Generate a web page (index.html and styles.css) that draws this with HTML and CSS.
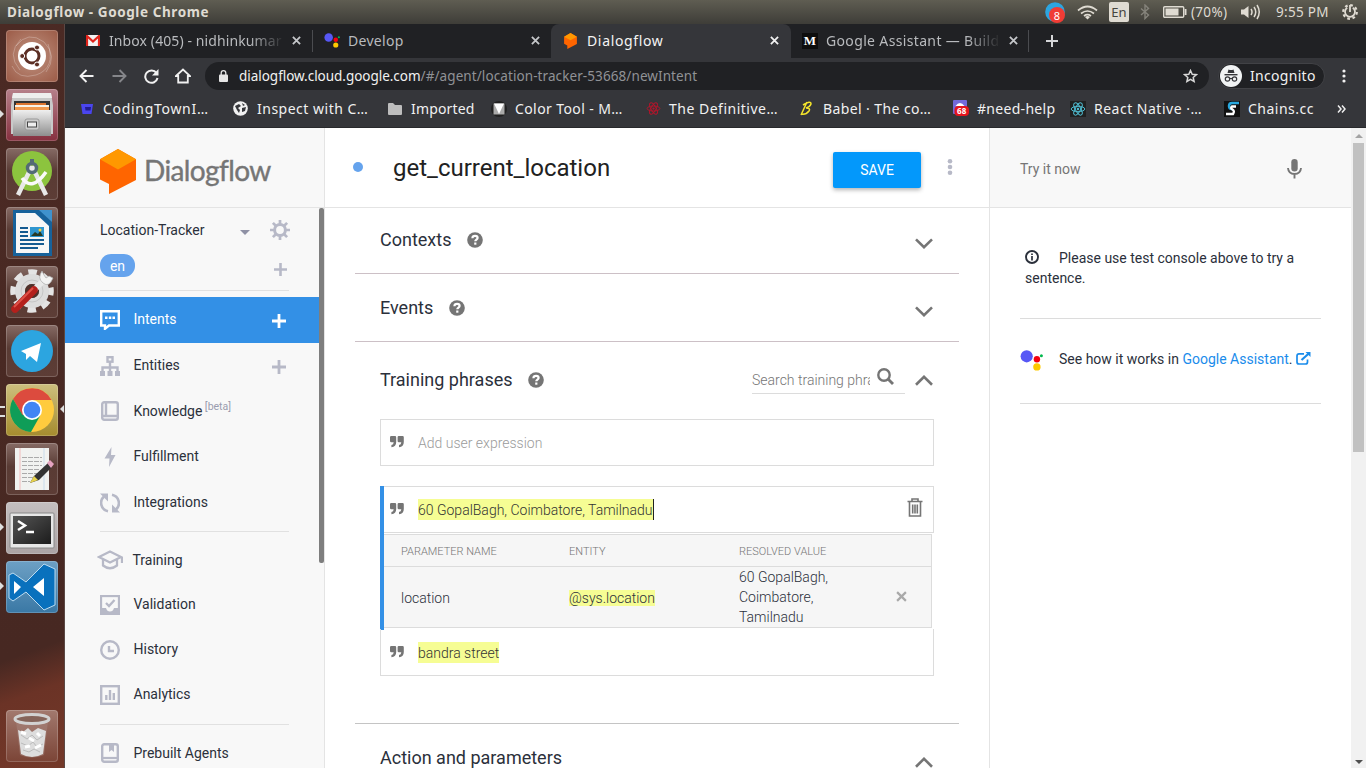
FILE: index.html
```html
<!DOCTYPE html>
<html lang="en">
<head>
<meta charset="utf-8">
<title>Dialogflow</title>
<link rel="stylesheet" href="styles.css">
</head>
<body>
<svg class="defs" width="0" height="0">
  <defs>
    <linearGradient id="gMetal" x1="0" y1="0" x2="0" y2="1"><stop offset="0" stop-color="#efefef"/><stop offset="1" stop-color="#8e8e8e"/></linearGradient>
    <linearGradient id="gDark" x1="0" y1="0" x2="1" y2="1"><stop offset="0" stop-color="#555"/><stop offset="1" stop-color="#1c1c1c"/></linearGradient>
    <symbol id="help" viewBox="0 0 16 16"><circle cx="8" cy="8" r="7.800" fill="#757575"/><path d="M5.400 6.200C5.500 4.600 6.700 3.900 8.100 3.900c1.400 0 2.500.8 2.500 2.100 0 1.700-2.300 1.700-2.300 3.300" fill="none" stroke="#fff" stroke-width="2.200"/><rect x="7.200" y="10.500" width="2.200" height="2.200" fill="#fff"/></symbol>
    <symbol id="down" viewBox="0 0 18 11"><path d="M1 1.300 9 9.200 17 1.300" fill="none" stroke="#757575" stroke-width="2.600"/></symbol>
    <symbol id="quote" viewBox="0 0 14 12"><path d="M0 1.200Q0 0 1.200 0H5Q6.200 0 6.200 1.200V6Q6.200 11 1.400 11.200V9Q3.600 8.700 3.700 6.200H1.200Q0 6.200 0 5ZM7.600 1.200Q7.600 0 8.800 0h3.800Q13.800 0 13.800 1.200V6Q13.800 11 9 11.200V9q2.200-.3 2.300-2.800H8.800Q7.600 6.200 7.600 5Z" fill="#757575"/></symbol>
    <symbol id="close" viewBox="0 0 10 10"><path d="M1 1 9 9M9 1 1 9" stroke="currentColor" stroke-width="2"/></symbol>
    <symbol id="plus" viewBox="0 0 14 14"><path d="M7 0V14M0 7H14" stroke="currentColor" stroke-width="2.800"/></symbol>
    <symbol id="assistant" viewBox="0 0 23 21"><circle cx="6.700" cy="6.300" r="6.100" fill="#5757f5"/><circle cx="16.900" cy="9.300" r="3.200" fill="#f5000f"/><circle cx="16.900" cy="16.900" r="3.700" fill="#fdc900"/><circle cx="21.400" cy="5.800" r="1.500" fill="#00b84c"/></symbol>
    <symbol id="flow" viewBox="0 0 36 45"><path d="M18 0 36 10.300V31L9 45V35L0 30.500V10.300Z" fill="#ff6500"/><path d="M18 0 36 10.300 18 20.500 0 10.300Z" fill="#ff9800"/></symbol>
    <symbol id="atom" viewBox="0 0 16 16"><g fill="none" stroke="currentColor" stroke-width="1"><ellipse cx="8" cy="8" rx="6.800" ry="2.700"/><ellipse cx="8" cy="8" rx="6.800" ry="2.700" transform="rotate(60 8 8)"/><ellipse cx="8" cy="8" rx="6.800" ry="2.700" transform="rotate(120 8 8)"/></g><circle cx="8" cy="8" r="1.200" fill="currentColor"/></symbol>
  </defs>
</svg>

<header class="sysbar">
  <span class="systitle">Dialogflow - Google Chrome</span>
  <div class="tray">
    <svg width="20" height="21" viewBox="0 0 20 21"><circle cx="10" cy="10" r="9.800" fill="#2ca5e0"/><circle cx="12" cy="13" r="8" fill="#f03c35"/><text x="12" y="17.500" text-anchor="middle" class="badge">8</text></svg>
    <svg class="t-wifi" width="21" height="15" viewBox="0 0 21 15"><g fill="none" stroke="#dfdbd2" stroke-width="1.700"><path d="M1 5.500Q10.500-2.500 20 5.500M4 8.500q6.500-5 13 0M7 11q3.500-2.600 7 0"/></g><path d="M10.500 14.500 8 12q2.500-1.800 5 0Z" fill="#dfdbd2"/></svg>
    <span class="lang">En</span>
    <svg class="t-bt" width="10" height="16" viewBox="0 0 10 16"><path d="M1 4.500 8.500 11 5 14.500V1L8.500 4.500 1 11" fill="none" stroke="#85837b" stroke-width="1.400"/></svg>
    <svg class="t-bat" width="24" height="12" viewBox="0 0 24 12"><rect x=".7" y=".7" width="20" height="10.600" rx="1" fill="none" stroke="#dfdbd2" stroke-width="1.400"/><rect x="2.500" y="2.500" width="13" height="7" fill="#dfdbd2"/><path d="M22.600 3v6" stroke="#dfdbd2" stroke-width="1.800"/></svg>
    <span class="pct">(70%)</span>
    <svg class="t-vol" width="20" height="16" viewBox="0 0 20 16"><path d="M0 5.500H3L7.500 2V14L3 10.500H0Z" fill="#dfdbd2"/><path d="M10 5q2 3 0 6M13 3q3.500 5 0 10M16 1q4.500 7 0 14" fill="none" stroke="#dfdbd2" stroke-width="1.500"/></svg>
    <span class="clock">9:55 PM</span>
    <svg class="t-gear" width="16" height="16" viewBox="0 0 16 16"><circle cx="8" cy="8" r="6.800" fill="none" stroke="#dfdbd2" stroke-width="2.200" stroke-dasharray="2.700 2.640"/><path d="M5.200 3.700A5 5 0 1 0 10.800 3.700" fill="none" stroke="#dfdbd2" stroke-width="1.800"/><path d="M8 1v7" stroke="#dfdbd2" stroke-width="1.800"/></svg>
  </div>
</header>

<div class="desktop">
  <nav class="dock">
    <div class="tile t-ubuntu"><svg viewBox="0 0 52 52"><g fill="none" stroke="#fff" stroke-opacity=".25"><path d="M10 16Q22 0 38 12 52 26 40 42M14 40Q0 24 15 9M42 14Q50 38 30 45 12 50 6 36"/></g><circle cx="26" cy="26" r="14" fill="#fff"/><circle cx="26" cy="26" r="7" fill="none" stroke="#5b2e24" stroke-width="3"/><g fill="#5b2e24" stroke="#fff"><circle cx="16.200" cy="26" r="2.500"/><circle cx="31" cy="17.500" r="2.500"/><circle cx="31" cy="34.500" r="2.500"/></g></svg></div>
    <div class="tile t-files run"><svg viewBox="0 0 52 52"><path d="M7 4H45L47 16V45H5V16Z" fill="#c9c9c9"/><path d="M7 4H45L46 9H6Z" fill="#eee"/><rect x="8" y="12" width="36" height="12" fill="#333"/><path d="M10 14h30v7H10Z" fill="#dc752f"/><path d="M9 16H43V18H9Z" fill="#f7f2e8"/><path d="M9 18H43V22H9Z" fill="#f09a50"/><rect x="7" y="21" width="38" height="26" fill="url(#gMetal)"/><rect x="19" y="30" width="14" height="11" rx="2" fill="#ccc" stroke="#999"/><rect x="21.500" y="33" width="9" height="5" fill="#eee" stroke="#444"/></svg></div>
    <div class="tile t-studio"><svg viewBox="0 0 52 52"><circle cx="26" cy="23" r="20" fill="#8cc43e"/><path d="M26 18 12 47M26 18 40 47" stroke="#e8e8e8" stroke-width="4.500"/><path d="M16 30Q26 44 40 24" fill="none" stroke="#fafafa" stroke-width="3.500"/><path d="M24 11h4v4h-4Z" fill="#536b75"/><circle cx="26" cy="20" r="4.500" fill="none" stroke="#536b75" stroke-width="3.500"/></svg></div>
    <div class="tile t-writer"><svg viewBox="0 0 52 52"><path d="M7 3H34L46 15V49H7Z" fill="#17629b"/><path d="M33 3H46V15Z" fill="#3f92cd"/><path d="M10 6H29L43 19V46H10Z" fill="#f7f7f7"/><g stroke="#155b91" stroke-width="2"><path d="M14 21h8M14 25h8M14 29h8M14 33H38M14 37H38M14 41H32"/></g><rect x="24" y="20" width="14" height="10" fill="#2f96cf"/><path d="M25 29l4-4 3 2 2-3 3 5Z" fill="#283a24"/><circle cx="34" cy="23" r="1.500" fill="#fbd13a"/></svg></div>
    <div class="tile t-tools"><svg viewBox="0 0 52 52"><circle cx="26" cy="25" r="18.800" fill="none" stroke="#e4e4e4" stroke-width="6" stroke-dasharray="8.500 6.265" stroke-dashoffset="4.250"/><circle cx="26" cy="25" r="12" fill="none" stroke="#dcdcdc" stroke-width="10"/><circle cx="26" cy="25" r="11" fill="none" stroke="#c6c6c6" stroke-width="1"/><circle cx="26" cy="25" r="7" fill="#50312b"/><path d="M27 25 39 13" stroke="#e9e9e9" stroke-width="6"/><path d="M36 5Q31 12 37 17T47 12L43 10 40 12 38 9Z" fill="#f3f3f3" stroke="#aaa" stroke-width=".7"/><path d="M9 43 28 24" stroke="#b4201c" stroke-width="7.500" stroke-linecap="round"/><path d="M8 41 27 22" stroke="#df5147" stroke-width="2"/></svg></div>
    <div class="tile t-telegram"><svg viewBox="0 0 52 52"><circle cx="26" cy="26" r="21" fill="#2ca5e0"/><path d="M15 26 35 18 31 37 24 31 20 35V29Z" fill="#fff"/></svg></div>
    <div class="tile t-chrome run active"><svg viewBox="0 0 52 52"><circle cx="26" cy="26" r="22" fill="#ffcb3e"/><path d="M26 26 16.500 31.500 7 15A22 22 0 0 1 45.500 16H26Z" fill="#dc4b3e"/><path d="M7 15A22 22 0 0 0 25 48L34 32 26 26 16.500 31Z" fill="#0f9d58"/><circle cx="26" cy="26" r="10" fill="#fff"/><circle cx="26" cy="26" r="8.300" fill="#4285f4"/></svg></div>
    <div class="tile t-edit"><svg viewBox="0 0 52 52"><rect x="9" y="5" width="34" height="42" fill="#f1f2f0"/><path d="M14 5V47" stroke="#f2bcbc"/><path d="M38 5V47" stroke="#c9dcec"/><path d="M16 14.500H36M16 18.500H36M16 22.500H36M16 26.500H34M16 30.500H32M16 34.500H28M16 38.500H24" stroke="#aaa" stroke-dasharray="5 1"/><path d="M24 40 28 33 42 20 46 24 33 37Z" fill="#333"/><path d="M41 20 44 17 48 21 45 25Z" fill="#e5a3c0"/><path d="M24 40 28 33 32 37Z" fill="#e7d24c"/></svg></div>
    <div class="tile t-term run"><svg viewBox="0 0 52 52"><rect x="4" y="11" width="44" height="35" rx="1" fill="#e7e7e7" stroke="#888"/><rect x="7" y="14" width="38" height="28" fill="url(#gDark)"/><path d="M12 19 19 23.500 12 28" fill="none" stroke="#fff" stroke-width="2.500"/><path d="M20 30h8" stroke="#fff" stroke-width="2.500"/></svg></div>
    <div class="tile t-code run"><svg viewBox="0 0 52 52"><path d="M3 14 7 12 20 21 38 3 49 8V44L38 49 20 31 7 40 3 37Z" fill="#0971bd" stroke="#bcdcf1"/><path d="M8 20 15 26 8 33ZM27 26 38 17V35Z" fill="#fff"/></svg></div>
    <div class="tile t-trash"><svg viewBox="0 0 52 52"><path d="M10 11 14 45Q26 50 38 45L42 11Z" fill="#a8867d" fill-opacity=".5"/><path d="M12 20 17 22 22 18 26 22 32 18 40 21 37 44Q26 50 15 44Z" fill="#ddd"/><path d="M15 25l6 4 5-4 5 5 6-4M15 33l7 3 5-4 4 5 6-3M17 40l6 2 5-3 6 3" fill="none" stroke="#bbb"/><path d="M15 22l5 2M23 28l5 3M31 23l3 3M19 37l5-1M29 38l6-3" stroke="#fff" stroke-width="3"/><ellipse cx="26" cy="9" rx="17" ry="4.500" fill="#85645a" stroke="#d2d2d2" stroke-width="3"/></svg></div>
  </nav>

  <div class="browser">
    <div class="tabs">
      <div class="tab tab1"><svg width="14" height="11" viewBox="0 0 14 11"><rect width="14" height="11" fill="#f2f2f2"/><path d="M1 11V1L7 6.500 13 1V11" fill="none" stroke="#e0241b" stroke-width="2.200"/></svg><span class="fade">Inbox (405) - nidhinkumar</span><svg class="x" width="9" height="9"><use href="#close"/></svg></div>
      <div class="tab tab2"><svg width="16" height="15"><use href="#assistant"/></svg><span>Develop</span><svg class="x" width="9" height="9"><use href="#close"/></svg></div>
      <div class="tab tab3"><svg width="13" height="16"><use href="#flow"/></svg><span>Dialogflow</span><svg class="x" width="9" height="9"><use href="#close"/></svg></div>
      <div class="tab tab4"><b class="medium">M</b><span class="fade">Google Assistant — Build</span><svg class="x" width="9" height="9"><use href="#close"/></svg></div>
      <svg class="newtab" width="12" height="12" viewBox="0 0 12 12"><path d="M6 0V12M0 6H12" stroke="#d5d6d8" stroke-width="2"/></svg>
    </div>
    <div class="toolbar">
      <svg class="nav-ic n1" width="15" height="14" viewBox="0 0 15 14"><path d="M14.500 7H1.500M7.500 1 1.500 7 7.500 13" fill="none" stroke="#f1f1f1" stroke-width="1.900"/></svg>
      <svg class="nav-ic n2" width="15" height="14" viewBox="0 0 15 14"><path d="M.5 7H13.500M7.500 1 13.500 7 7.500 13" fill="none" stroke="#85868a" stroke-width="1.900"/></svg>
      <svg class="nav-ic n3" width="15" height="15" viewBox="0 0 15 15"><path d="M12.500 4A6.200 6.200 0 1 0 13.500 9" fill="none" stroke="#f1f1f1" stroke-width="2"/><path d="M14.500 0V6.500H8Z" fill="#f1f1f1"/></svg>
      <svg class="nav-ic n4" width="16" height="16" viewBox="0 0 16 16"><path d="M1 8 8 1.500 15 8H12.800V14.500H3.200V8Z" fill="none" stroke="#f1f1f1" stroke-width="1.800"/></svg>
      <div class="url">
        <svg width="9" height="12" viewBox="0 0 9 12"><rect y="4.500" width="9" height="7.500" rx="1" fill="#e6e6e6"/><path d="M2.200 5V3a2.300 2.300 0 0 1 4.600 0V5" fill="none" stroke="#e6e6e6" stroke-width="1.300"/></svg>
        <span class="addr">dialogflow.cloud.google.com<i>/#/agent/location-tracker-53668/newIntent</i></span>
        <svg class="star" width="15" height="14" viewBox="0 0 15 14"><path d="M7.500 1.500 9.200 5.300 13.300 5.700 10.200 8.500 11.100 12.500 7.500 10.400 3.900 12.500 4.800 8.500 1.700 5.700 5.800 5.300Z" fill="none" stroke="#d8d8d8" stroke-width="1.500"/></svg>
      </div>
      <div class="incog"><svg width="22" height="22" viewBox="0 0 22 22"><circle cx="11" cy="11" r="11" fill="#f1f3f4"/><path d="M7.500 8 8.500 4.500Q11 5.500 13.500 4.500L14.500 8Z" fill="#35363a"/><path d="M4.500 9.700H17.500" stroke="#35363a" stroke-width="1.400"/><g fill="none" stroke="#35363a" stroke-width="1.200"><circle cx="7.500" cy="14" r="2.200"/><circle cx="14.500" cy="14" r="2.200"/><path d="M9.700 13.500h2.600"/></g></svg><span>Incognito</span></div>
      <svg class="menu" width="4" height="14" viewBox="0 0 4 14"><g fill="#f1f1f1"><circle cx="2" cy="2" r="1.600"/><circle cx="2" cy="7" r="1.600"/><circle cx="2" cy="12" r="1.600"/></g></svg>
    </div>
    <div class="marks">
      <div class="mark m1"><svg width="12" height="12" viewBox="0 0 12 12"><path d="M0 1H12L10.500 11H1.500Z" fill="#4a45ee"/><path d="M4 4H10L9.500 7.500H4.500Z" fill="#221c8e"/></svg><span>CodingTownI…</span></div>
      <div class="mark m2"><svg width="15" height="15" viewBox="0 0 15 15"><circle cx="7.500" cy="7.500" r="7.300" fill="#f1f1f1"/><path d="M2 5 6 3 8 5 5 7 7 9 6 12 4 9ZM9 7 13 6 12 10 9 11ZM9 2l3 2-2 1Z" fill="#35363a"/></svg><span>Inspect with C…</span></div>
      <div class="mark m3"><svg width="14" height="12" viewBox="0 0 14 12"><path d="M0 1Q0 0 1 0H5L7 2H13Q14 2 14 3V11Q14 12 13 12H1Q0 12 0 11Z" fill="#bdbdbd"/></svg><span>Imported</span></div>
      <div class="mark m4"><svg width="16" height="16" viewBox="0 0 16 16"><circle cx="8" cy="8" r="8" fill="#212121"/><rect x="2.500" y="2.500" width="11" height="11" fill="#aaa"/><path d="M3 2.500H13L8 13Z" fill="#fff"/></svg><span>Color Tool - M…</span></div>
      <div class="mark m5"><svg width="15" height="15" class="red"><use href="#atom"/></svg><span>The Definitive…</span></div>
      <div class="mark m6"><svg width="13" height="15" viewBox="0 0 13 15"><path d="M1 14 7 1M3 4Q11-1 11 3 10 6 6 7 11 7 9 10 6 14 1 13" fill="none" stroke="#f5e52b" stroke-width="1.500"/></svg><span>Babel · The co…</span></div>
      <div class="mark m7"><svg width="16" height="17" viewBox="0 0 16 17"><rect width="14" height="14" rx="1" fill="#7269da"/><path d="M2.500 6Q7 0 11.500 6" fill="#fff"/><rect x="1.500" y="6" width="14.500" height="10" rx="4" fill="#e5141d"/><text x="8.800" y="14" text-anchor="middle" class="b68">68</text></svg><span>#need-help</span></div>
      <div class="mark m8"><svg width="16" height="16" class="cyan"><rect width="16" height="16" fill="#202020"/><use href="#atom"/></svg><span>React Native ·…</span></div>
      <div class="mark m9"><svg width="16" height="16" viewBox="0 0 16 16"><rect width="16" height="16" fill="#111"/><path d="M15 2H8Q5 2 5 5T8 8" fill="none" stroke="#28a8df" stroke-width="2.500"/><path d="M12 5.500H8Q6 7 8.500 8.500T9 13H2" fill="none" stroke="#fff" stroke-width="2.300"/></svg><span>Chains.cc</span></div>
      <svg class="more" width="9" height="8" viewBox="0 0 9 8"><path d="M1 .5 4 4 1 7.500M5 .5 8 4 5 7.500" fill="none" stroke="#eee" stroke-width="1.500"/></svg>
    </div>

    <div class="page">
      <aside class="side">
        <div class="brand"><svg width="36" height="45"><use href="#flow"/></svg><span>Dialogflow</span></div>
        <div class="agent"><span>Location-Tracker</span><i class="caret"></i>
          <svg width="20" height="20" viewBox="0 0 20 20"><circle cx="10" cy="10" r="5.400" fill="none" stroke="#b7b9c7" stroke-width="3"/><path d="M10 0V4M10 16V20M0 10H4M16 10H20M2.900 2.900 5.800 5.800M14.200 14.200 17.100 17.100M2.900 17.100 5.800 14.200M14.200 5.800 17.100 2.900" stroke="#b7b9c7" stroke-width="2.700"/></svg></div>
        <div class="langrow"><span class="en">en</span><svg class="gplus" width="13" height="13"><use href="#plus"/></svg></div>
        <hr class="hr1">
        <ul class="menu1">
          <li class="sel"><svg class="ic" viewBox="0 0 20 20"><path d="M1.200 1.200H18.800V15.500H9L5 18.800V15.500H1.200Z" fill="none" stroke="#fff" stroke-width="2.400"/><path d="M5 6.500H7.500V9H5ZM8.800 6.500h2.500V9H8.800ZM12.500 6.500H15V9H12.500Z" fill="#fff"/></svg><span>Intents</span><svg class="pl" width="14" height="14"><use href="#plus"/></svg></li>
          <li><svg class="ic" viewBox="0 0 20 20"><g fill="none" stroke="#b7b9c7" stroke-width="2.400"><rect x="7.500" y="1.200" width="5" height="4.500"/><path d="M10 6V16M2.500 16V11.500H17.500V16"/></g><path d="M0 15H5V20H0ZM7.500 15h5v5h-5ZM15 15h5v5H15Z" fill="#b7b9c7"/></svg><span>Entities</span><svg class="pl gplus" width="14" height="14"><use href="#plus"/></svg></li>
          <li><svg class="ic" viewBox="0 0 20 20"><g fill="none" stroke="#b7b9c7" stroke-width="2.400"><rect x="2.200" y="1.200" width="15.600" height="17.600" rx="2"/><path d="M6 1V14M2 15H18"/></g></svg><span>Knowledge <sup>[beta]</sup></span></li>
          <li><svg class="ic" viewBox="0 0 20 20"><path d="M11.500 0 4.500 11.500H9.500L9 20 15.500 8H11Z" fill="#b7b9c7"/></svg><span>Fulfillment</span></li>
          <li><svg class="ic" viewBox="0 0 20 20"><path d="M8 18.200A8.500 8.500 0 0 1 4 3.500M12 1.800A8.500 8.500 0 0 1 16 16.500" fill="none" stroke="#b7b9c7" stroke-width="2.600"/><path d="M0 .5H8V8.500ZM20 19.500H12V11.500Z" fill="#b7b9c7"/></svg><span>Integrations</span></li>
        </ul>
        <hr>
        <ul class="menu2">
          <li><svg class="ic cap" viewBox="0 0 26 20"><g fill="none" stroke="#b7b9c7" stroke-width="2.300"><path d="M2 7 13 1.500 24 7 13 12.500ZM6 9V15.500Q13 21 20 15.500V9M25 7V13"/></g></svg><span class="tr">Training</span></li>
          <li><svg class="ic" viewBox="0 0 20 20"><rect x="1" y="1" width="18" height="18" fill="none" stroke="#b7b9c7" stroke-width="2.300"/><path d="M1 13H6Q7 16.500 10 16.500T14 13H19V19H1Z" fill="#b7b9c7"/><path d="M6 8 9 11 14.500 5" fill="none" stroke="#b7b9c7" stroke-width="2.300"/></svg><span>Validation</span></li>
          <li><svg class="ic" viewBox="0 0 20 20"><circle cx="10" cy="10" r="8.800" fill="none" stroke="#b7b9c7" stroke-width="2.400"/><path d="M9 6V11H14" fill="none" stroke="#b7b9c7" stroke-width="2.400"/></svg><span>History</span></li>
          <li><svg class="ic" viewBox="0 0 20 20"><rect x="1.200" y="1.200" width="17.600" height="17.600" fill="none" stroke="#b7b9c7" stroke-width="2.400"/><path d="M6.300 10V15M10 5V15M13.800 8V15" stroke="#b7b9c7" stroke-width="2.400"/></svg><span>Analytics</span></li>
        </ul>
        <hr>
        <ul class="menu3">
          <li><svg class="ic" viewBox="0 0 20 20"><rect x="2.200" y="1.200" width="15.600" height="17.600" rx="2" fill="none" stroke="#b7b9c7" stroke-width="2.400"/><path d="M2 15H18" stroke="#b7b9c7" stroke-width="2.200"/><path d="M9 2h5V9L11.500 7 9 9Z" fill="#b7b9c7"/></svg><span>Prebuilt Agents</span></li>
        </ul>
        <i class="sidethumb"></i>
      </aside>

      <main class="main">
        <div class="head">
          <i class="dot"></i><h1>get_current_location</h1>
          <button class="save">SAVE</button>
          <svg width="6" height="16" viewBox="0 0 6 16"><g fill="#b7b9c7"><circle cx="3" cy="2.300" r="2.300"/><circle cx="3" cy="8" r="2.300"/><circle cx="3" cy="13.700" r="2.300"/></g></svg>
        </div>
        <section class="sec s1"><h2>Contexts</h2><svg class="q" width="16" height="16"><use href="#help"/></svg><svg class="ch" width="18" height="11"><use href="#down"/></svg></section>
        <section class="sec s2"><h2>Events</h2><svg class="q" width="16" height="16"><use href="#help"/></svg><svg class="ch" width="18" height="11"><use href="#down"/></svg></section>
        <section class="phr">
          <div class="phead"><h2>Training phrases</h2><svg class="q" width="16" height="16"><use href="#help"/></svg>
            <div class="search"><input type="text" placeholder="Search training phrases"><svg width="17" height="17" viewBox="0 0 17 17"><circle cx="7" cy="7" r="5.700" fill="none" stroke="#757575" stroke-width="2.400"/><path d="M11 11 16 16" stroke="#757575" stroke-width="2.800"/></svg></div>
            <svg class="ch up" width="18" height="11"><use href="#down"/></svg></div>
          <div class="box"><svg class="qt" width="14" height="12"><use href="#quote"/></svg><span class="ph">Add user expression</span></div>
          <div class="group">
            <div class="box on"><svg class="qt" width="14" height="12"><use href="#quote"/></svg><span class="hl cur">60 GopalBagh, Coimbatore, Tamilnadu</span>
              <svg class="bin" width="16" height="19" viewBox="0 0 16 19"><g fill="none" stroke="#757575" stroke-width="1.600"><path d="M.5 3.500H15.500M5 3.500V1H11V3.500M2.500 4V18H13.500V4M5.700 6.500V15.500M8 6.500V15.500M10.300 6.500V15.500"/></g></svg></div>
            <div class="params">
              <div class="pr ph1"><span>PARAMETER NAME</span><span>ENTITY</span><span>RESOLVED VALUE</span></div>
              <div class="pr pv"><span>location</span><span class="ent"><mark>@sys.location</mark></span><span class="val">60 GopalBagh,<br>Coimbatore,<br>Tamilnadu</span><svg width="11" height="11"><use href="#close"/></svg></div>
            </div>
          </div>
          <div class="box last"><svg class="qt" width="14" height="12"><use href="#quote"/></svg><span class="hl">bandra street</span></div>
        </section>
        <section class="sec s4"><h2>Action and parameters</h2><svg class="ch up" width="18" height="11"><use href="#down"/></svg></section>
      </main>

      <aside class="test">
        <div class="thead"><span>Try it now</span><svg width="15" height="20" viewBox="0 0 15 20"><rect x="4.300" y="0" width="6.400" height="12.500" rx="3.200" fill="#757575"/><path d="M1 9Q1.500 15 7.500 15T14 9M7.500 15V19.500" fill="none" stroke="#757575" stroke-width="1.900"/></svg></div>
        <div class="tmsg"><svg width="14" height="14" viewBox="0 0 14 14"><circle cx="7" cy="7" r="6" fill="none" stroke="#2b303b" stroke-width="1.900"/><path d="M7 6V10.500M7 3.400V5" stroke="#2b303b" stroke-width="1.700"/></svg>Please use test console above to try a sentence.</div>
        <div class="tsee"><svg width="23" height="21"><use href="#assistant"/></svg><span>See how it works in <a>Google Assistant</a>.</span>
          <svg class="ext" width="15" height="13" viewBox="0 0 15 13"><path d="M8 1.800H3Q1 1.800 1 4V10Q1 12 3 12H9.500Q11.500 12 11.500 10V7.500" fill="none" stroke="#1a8ceb" stroke-width="1.700"/><path d="M5.500 8 12.500 1.800" stroke="#1a8ceb" stroke-width="2.200"/><path d="M9.500 0H14.500V5Z" fill="#1a8ceb"/></svg></div>
      </aside>
      <div class="scroll"><i class="arr"></i><i class="thumb"></i><i class="arr dn"></i></div>
    </div>
  </div>
</div>
</body>
</html>
```
FILE: styles.css
```css
* { box-sizing: border-box; }
body { margin: 0; width: 1366px; height: 768px; overflow: hidden; font-family: Roboto, "Noto Sans", sans-serif; font-size: 14px; color: #2b303b; background: #fff; }
svg { display: block; flex: none; }
.defs { position: absolute; }
span, h1, h2 { white-space: nowrap; }
h1, h2 { margin: 0; font-weight: 400; }

/* system bar */
.sysbar { height: 24px; display: flex; align-items: center; justify-content: space-between; padding: 0 8px 0 7px; background: linear-gradient(#5f5d52, #3e3d38); font-family: "Noto Sans", sans-serif; color: #dfdbd2; }
.systitle { font-weight: 700; font-size: 13.500px; letter-spacing: .58px; }
.tray { display: flex; align-items: center; font-size: 13.500px; }
.badge { font: 11px "Noto Sans", sans-serif; fill: #fff; }
.t-wifi { margin-left: 12px; }
.lang { margin-left: 11px; width: 20px; height: 20px; line-height: 20px; background: #dfdbd2; color: #45443e; font-size: 13px; text-align: center; border-radius: 2px; }
.t-bt { margin-left: 11px; }
.t-bat { margin-left: 13px; }
.pct { margin-left: 4px; width: 38px; letter-spacing: .3px; }
.t-vol { margin-left: 12px; }
.clock { margin-left: 15px; width: 53px; letter-spacing: .3px; }
.t-gear { margin-left: 13px; }

.desktop { display: flex; height: 744px; }

/* launcher */
.dock { width: 65px; padding: 6px 7px 6px 6px; display: flex; flex-direction: column; gap: 7px; background: linear-gradient(160deg, #4b2a24 0, #472822 600px, #6b3326 640px, #763a2a 744px); border-right: 1px solid #5b4844; }
.tile { position: relative; width: 52px; height: 52px; flex: none; border-radius: 4px; background: linear-gradient(#866b65, #593b34 45%, #5d3d36); box-shadow: inset 0 0 0 1px #ffffff30; }
.tile svg { width: 52px; height: 52px; }
.t-ubuntu { background: radial-gradient(#c09381, #9b5a46); }
.t-files { background: linear-gradient(#b6808a, #86303f); }
.t-chrome { background: linear-gradient(#cdbf7e, #a58c2e); }
.t-term { background: linear-gradient(#c4bfc0, #aba3a4); }
.t-code { background: linear-gradient(#6da0c4, #3a78a5); }
.t-trash { margin-top: auto; background: linear-gradient(#a2796e, #7b4436); }
.run::before { content: ""; position: absolute; left: -6px; top: 21px; border: 4.500px solid transparent; border-left-color: #dedede; border-right: 0; }
.active::before { top: 22px; width: 5px; height: 7px; border: solid #dedede; border-width: 2px 0; }
.active::after { content: ""; position: absolute; right: -6px; top: 21px; border: 4.500px solid transparent; border-right-color: #dedede; border-left: 0; }

/* browser chrome */
.browser { width: 1301px; display: flex; flex-direction: column; font-family: "Noto Sans", sans-serif; color: #f1f1f1; }
.tabs { height: 34px; background: #202124; display: flex; align-items: center; }
.tab { height: 34px; display: flex; align-items: center; color: #b9bbbe; font-size: 14px; }
.tab > span { padding-bottom: 2px; letter-spacing: .1px; }
.tab .x { margin-left: auto; color: #c5c7ca; }
.tab svg { margin-top: -1px; }
.tab1 { width: 248px; padding: 0 11px 0 21px; border-image: linear-gradient(transparent 20%, #4b4c50 20% 80%, transparent 80%) 1; border-right: 1px solid; }
.tab1 span { margin-left: 9px; width: 176px; }
.tab2 { width: 238px; padding: 0 11px 0 11px; }
.tab .x { margin-right: 0; }
.tab2 span { margin-left: 8px; letter-spacing: .3px; }
.tab3 { width: 240px; padding: 0 12px 0 13px; background: #35363a; border-radius: 8px 8px 0 0; color: #f4f4f4; }
.tab3 span { margin-left: 10px; letter-spacing: .65px; }
.tab3 .x { color: #f1f1f1; }
.tab4 { width: 238px; padding: 0 10px 0 11px; border-image: linear-gradient(transparent 20%, #4b4c50 20% 80%, transparent 80%) 1; border-right: 1px solid; }
.tab4 span { margin-left: 8px; width: 175px; letter-spacing: .35px; }
.medium { width: 16px; height: 16px; background: #0d0d0d; color: #fff; font: 700 13px/16px "Liberation Serif", serif; text-align: center; }
.fade { overflow: hidden; -webkit-mask-image: linear-gradient(90deg, #000 80%, transparent); mask-image: linear-gradient(90deg, #000 80%, transparent); }
.newtab { margin-left: 17px; }
.toolbar { height: 36px; background: #35363a; display: flex; align-items: center; padding-left: 14px; }
.n2 { margin-left: 18px; }
.n3 { margin-left: 17px; }
.n4 { margin-left: 16px; }
.url { margin-left: 14px; width: 1004px; height: 28px; border-radius: 14px; background: #202124; display: flex; align-items: center; padding: 0 11px 0 14px; }
.addr { margin-left: 11px; font-size: 13.500px; color: #f1f1f1; letter-spacing: -.03px; }
.addr i { font-style: normal; color: #909296; letter-spacing: .09px; }
.star { margin-left: auto; }
.incog { margin-left: 9px; width: 107px; height: 26px; border-radius: 13px; background: #202124; border: 1px solid #414246; display: flex; align-items: center; padding-left: 1px; font-size: 14px; }
.incog span { margin-left: 8px; padding-bottom: 1px; letter-spacing: .3px; }
.menu { margin-left: 17px; }
.marks { height: 34px; background: #35363a; border-bottom: 1px solid #28292c; display: flex; align-items: center; padding: 0 0 4px 16px; font-size: 14px; }
.mark { display: flex; align-items: center; letter-spacing: .5px; }
.m1 { width: 152px; gap: 10px; letter-spacing: .7px; } .m2 { width: 155px; gap: 9px; } .m3 { width: 103px; gap: 9px; letter-spacing: .15px; }
.m4 { width: 155px; gap: 8px; letter-spacing: .4px; } .m5 { width: 154px; gap: 8px; } .m6 { width: 153px; gap: 10px; letter-spacing: .4px; }
.m7 { width: 117px; gap: 8px; letter-spacing: .3px; } .m8 { width: 154px; gap: 8px; } .m9 { width: 113px; gap: 8px; }
.red { color: #b3152b; }
.cyan { color: #4fbcd0; }
.b68 { font: 700 8px "Noto Sans", sans-serif; fill: #fff; }

/* page */
.page { flex: 1; display: flex; background: #fff; color: #2b303b; font-family: Roboto, sans-serif; min-height: 0; }
.side { position: relative; width: 260px; background: #f8f8f8; border-right: 1px solid #e4e4e4; overflow: hidden; }
.brand { height: 80px; border-bottom: 1px solid #e4e4e4; display: flex; align-items: center; padding: 7px 0 0 35px; }
.brand span { margin-left: 8px; padding-bottom: 3px; font: 28px Lato, sans-serif; letter-spacing: -.6px; color: #757575; -webkit-text-stroke: .4px #757575; }
.agent { height: 44px; display: flex; align-items: center; padding: 0 34px 0 35px; }
.agent span { width: 140px; }
.caret { border: 5px solid transparent; border-top-color: #8f91a5; border-bottom: 0; margin: 4px 20px 0 0; }
.langrow { height: 38px; display: flex; justify-content: space-between; align-items: flex-start; padding: 2px 37px 0 35px; }
.en { width: 35px; height: 23px; border-radius: 11px; background: #65a3ed; color: #fff; text-align: center; line-height: 24px; }
.gplus { color: #b7b9c7; }
.langrow svg { margin-top: 9px; }
.side hr { margin: 0 35px; height: 1px; border: 0; background: #e1e1e1; }
.side ul { list-style: none; margin: 0; padding: 0; }
.side .menu1 { padding-top: 6px; height: 240px; }
.menu1 li { height: 45.700px; }
.side .menu2 { padding-top: 6px; height: 192px; }
.menu2 li { height: 44.800px; }
.side .menu3 { padding-top: 5px; }
.menu3 li { height: 46px; }
.side li { display: flex; align-items: center; padding: 0 38px 0 35px; }
.side li span { margin-left: 13.500px; padding-bottom: 1px; }
.side li .tr { margin-left: 12.500px; }
.menu2 li:nth-child(2) span, .menu2 li:nth-child(3) span { padding-bottom: 2px; }
.ic { width: 20px; height: 20px; }
.cap { width: 26px; margin: 0 -3px; }
.pl { margin: 2px 0 0 auto; }
.sel { background: #3390e6; color: #fff; }
.side sup { font-size: 10.500px; color: #9a9caf; line-height: 0; margin-left: -1px; }
.sidethumb { position: absolute; right: 0; top: 80px; width: 5px; height: 355px; border-radius: 2px; background: #7e7e7e; }

.main { width: 665px; border-right: 1px solid #e4e4e4; overflow: hidden; }
.head { height: 80px; border-bottom: 1px solid #e4e4e4; display: flex; align-items: center; padding-left: 28px; }
.dot { width: 10px; height: 10px; border-radius: 5px; background: #65a3ed; margin-top: -1px; }
.head h1 { margin-left: 30px; width: 440px; font-size: 24px; color: #212121; }
.save { width: 88px; height: 36px; margin-top: 4px; border: 0; border-radius: 2px; background: #0398fb; color: #fff; font: 14px Roboto, sans-serif; box-shadow: 0 2px 4px #0000004d; }
.head svg { margin-left: 26px; margin-top: -1px; }
.sec { margin: 0 30px; padding: 0 25px; display: flex; align-items: center; border-bottom: 1px solid #ccc0c6; }
.s1 { height: 66px; }
.s2 { height: 68px; }
h2 { font-size: 18px; color: #2b303b; }
.q { margin-left: 15.500px; }
.ch { margin-left: auto; margin-top: 6px; margin-right: 1px; }
.s1 h2, .s1 .q { margin-top: -2px; }
.s2 .ch { margin-top: 8px; }
.up { transform: scaleY(-1); }
.phr { margin: 0 30px; padding: 0 25px; height: 382px; border-bottom: 1px solid #c4c4c4; }
.phead { height: 77px; display: flex; align-items: center; }
.phead h2, .phead .q { margin-top: -2px; }
.search { margin: -2px 0 0 auto; width: 153px; height: 28px; border-bottom: 1px solid #dcdcdc; display: flex; align-items: center; }
.search input { width: 118px; height: 24px; padding: 0; border: 0; outline: 0; background: none; font: 300 14px Roboto, sans-serif; color: #333; margin-top: 1px; }
.search input::placeholder { color: #757575; opacity: 1; }
.search svg { margin: -6px 0 0 7px; }
.phead .up { margin-left: 10px; margin-top: 0; }
.box { height: 47px; border: 1px solid #dcdcdc; display: flex; align-items: center; padding-left: 9px; }
.box span { margin-left: 14px; }
.qt { margin-top: -2px; }
.ph { font-weight: 300; color: #9b9b9b; }
.group { margin-top: 20px; border-left: 4px solid #3390e6; height: 144px; }
.on { padding-left: 6px; border-left: 0; }
.on .bin { margin: -5px 10px 0 auto; }
.hl, mark { background: #f6fd94; line-height: 21px; }
.hl { font-weight: 300; color: #333; padding-top: 1px; line-height: 20px; }
.cur { border-right: 1px solid #222; }
.params { width: 548px; height: 94px; margin-top: 1px; background: #f6f6f6; border: 1px solid #dcdcdc; border-left: 0; }
.pr { display: grid; grid-template-columns: 168px 170px 157px 12px; align-items: center; padding-left: 17px; }
.ph1 { height: 32px; padding-top: 2px; border-bottom: 1px solid #dcdcdc; font-size: 11px; font-weight: 300; color: #757575; }
.pv { height: 61px; font-weight: 300; }
.pv svg { color: #a9a9a9; margin-top: -3px; }
.ent { padding-top: 1px; }
mark { font-weight: 300; color: #2b303b; padding: 0; }
.val { line-height: 20px; margin-top: -2px; }
.last { margin-top: -1px; border-top: 0; padding-top: 1px; }
.s4 { height: 70px; border: 0; }
.s4 h2 { margin-top: -3px; }
.s4 .ch { margin-top: 7px; }

.test { width: 361px; }
.thead { height: 80px; background: #f8f8f8; border-bottom: 1px solid #e4e4e4; display: flex; align-items: center; justify-content: space-between; padding: 2px 49px 0 30px; color: #757575; }
.tmsg { margin: 0 30px; padding: 40px 5px 0; height: 111px; line-height: 20px; border-bottom: 1px solid #dcdcdc; }
.tmsg svg { display: inline-block; margin-right: 20px; vertical-align: -1px; }
.tsee { margin: 0 30px; height: 85px; border-bottom: 1px solid #dcdcdc; display: flex; align-items: center; padding-bottom: 4px; }
.tsee span { margin-left: 16px; }
.tsee > svg:first-child { margin-top: 3px; }
.tsee a { color: #1a8ceb; }
.tsee .ext { margin: -2px 0 0 3px; }
.scroll { width: 15px; background: #f1f1f1; display: flex; flex-direction: column; align-items: center; padding: 6px 0 4px; }
.arr { border: 4px solid transparent; border-bottom-color: #a3a3a3; border-top: 0; }
.thumb { width: 11px; height: 309px; margin: 5px 0 0 0; background: #c1c1c1; }
.dn { margin-top: auto; border: 4px solid transparent; border-top-color: #505050; border-bottom: 0; }
```
